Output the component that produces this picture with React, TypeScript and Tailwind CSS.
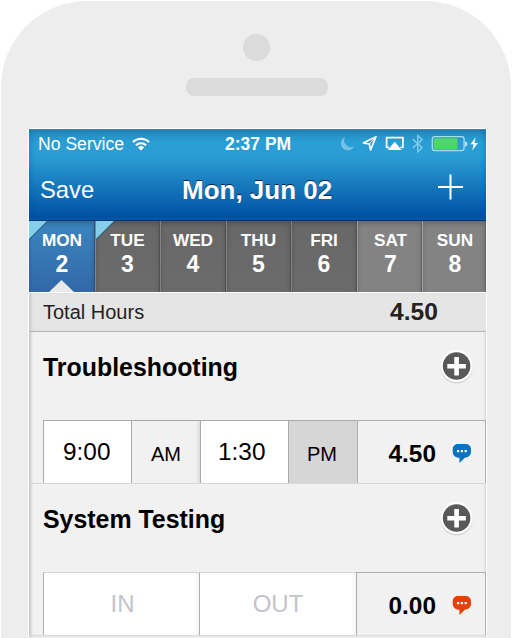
import React from "react";

const DAYS = [
  { name: "MON", date: "2", width: "w-[66px]", entry: true, kind: "active" },
  { name: "TUE", date: "3", width: "w-[65px]", entry: true, kind: "week" },
  { name: "WED", date: "4", width: "w-[66px]", entry: false, kind: "week" },
  { name: "THU", date: "5", width: "w-[65px]", entry: false, kind: "week" },
  { name: "FRI", date: "6", width: "w-[66px]", entry: false, kind: "week" },
  { name: "SAT", date: "7", width: "w-[65px]", entry: false, kind: "weekend" },
  { name: "SUN", date: "8", width: "w-[64px]", entry: false, kind: "weekend" },
];

const TAB_STYLE: Record<string, string> = {
  active: "bg-linear-to-b from-[#3b86c0] to-[#3268a8] border-r border-[#2a5486] pl-px",
  week: "bg-linear-to-b from-[#686868] to-[#6b6b6b] border-r border-r-[#505050] border-l border-l-[#838383]",
  weekend: "bg-[#838383] border-r border-r-[#626262] border-l border-l-[#a0a0a0] pl-[2px]",
};

function StatusIcons() {
  return (
    <svg width="140" height="20" viewBox="337.5 134 140 20" className="block shrink-0">
      <path d="M344.8 137a6.9 6.9 0 1 0 8.8 9.3a6.6 6.6 0 0 1-8.8-9.3z" fill="#75c2e6" />
      <path d="M375.5 136.6L362.8 143l6 1l1.3 6z" fill="none" stroke="#fff" strokeWidth="1.6" strokeLinejoin="round" />
      <path d="M368.8 144l6.4-7" stroke="#fff" strokeWidth="1" />
      <path d="M388.5 147.4h-2.4v-9.7h16.3v9.7h-2.4" fill="none" stroke="#fff" strokeWidth="1.7" />
      <path d="M394.2 141.8l6.9 8.3h-13.8z" fill="#fff" />
      <path d="M412.3 139.2l9.3 8.3l-4.3 4.4v-16.2l4.3 4.1l-9.3 8.3" fill="none" stroke="#84cced" strokeWidth="1.4" />
      <rect x="431.8" y="136.7" width="31.8" height="14" rx="2.4" fill="none" stroke="#a8dcf3" strokeWidth="1.3" />
      <rect x="433.3" y="138.2" width="23.7" height="11.2" rx="1" fill="#4cd864" />
      <path d="M464.7 141.2c2.8.7 2.8 4.8 0 5.5z" fill="#c5e8f6" />
      <path d="M475.2 137.3l-5.2 7h3.2l-1.6 6.3l5.9-7.5h-3.6z" fill="#fff" />
    </svg>
  );
}

function WifiIcon() {
  return (
    <svg width="18" height="14" viewBox="0 0 18 14" className="mt-[7px] ml-[8px] block">
      <g fill="none" stroke="#fff" strokeWidth="2">
        <path d="M.9 5a11.7 11.7 0 0 1 16.2 0" />
        <path d="M3.9 8.2a7.4 7.4 0 0 1 10.2 0" />
      </g>
      <path d="M5.9 10.4a4.6 4.6 0 0 1 6.2 0L9 13.5z" fill="#fff" />
    </svg>
  );
}

function AddButton() {
  return (
    <svg width="34" height="36" viewBox="0 0 34 36" className="block">
      <circle cx="16.6" cy="18.4" r="16" fill="#d4d4d4" />
      <circle cx="16.6" cy="17" r="16" fill="#fff" />
      <circle cx="16.6" cy="17" r="13.8" fill="#595959" />
      <path d="M7.3 17.3h18.6M16.6 8v18.6" stroke="#fff" strokeWidth="4.6" />
    </svg>
  );
}

function CommentIcon({ fill }: { fill: string }) {
  return (
    <svg width="20" height="21" viewBox="0 0 20 21" className="block">
      <path d="M6 1h7.5C17 1 19 3.3 19 6.6v1.8c0 3.6-2.2 5.8-5.8 6.2C11.2 16 9.8 18.5 7.3 20c.3-1.9.3-3.6 0-5.2C3.2 14.6.7 12.2.7 8.4V6.6C.7 3.3 2.7 1 6 1z" fill={fill} />
      <g fill="#fff">
        <rect x="5" y="7" width="2.2" height="2.2" />
        <rect x="8.8" y="7" width="2.2" height="2.2" />
        <rect x="12.6" y="7" width="2.2" height="2.2" />
      </g>
    </svg>
  );
}

function SectionTitle({ children }: { children: React.ReactNode }) {
  return (
    <div className="flex h-[88px] justify-between pr-[12px] pl-[14px]">
      <h2 className="pt-[17.5px] text-[24.9px] leading-[34px] font-bold text-black">{children}</h2>
      <div className="pt-[17px]"><AddButton /></div>
    </div>
  );
}

function RowTotal({ value, fill }: { value: string; fill: string }) {
  return (
    <div className="flex grow border-x border-t border-[#adafaf] bg-[#f1f1f1]">
      <span className="ml-auto pt-[17px] text-[24.4px] leading-[32px] font-bold">{value}</span>
      <span className="mt-[22px] mr-[13px] ml-[16px]"><CommentIcon fill={fill} /></span>
    </div>
  );
}

export default function App() {
  return (
    <div className="h-[638px] w-[512px] overflow-hidden bg-white font-['Liberation_Sans',Arial,sans-serif]">
      <div className="mx-px mt-px flex h-[637px] flex-col items-center rounded-t-[86px] bg-[#ededed]">
        <div className="mt-[33px] size-[27px] shrink-0 rounded-full bg-[#dbdbdb]" />
        <div className="mt-[17px] ml-px h-[18px] w-[142px] shrink-0 rounded-[8px] bg-[#dbdbdb]" />
        <main className="mt-[32px] ml-[3px] h-[509px] w-[459px] shrink-0 overflow-hidden border-x border-t border-white bg-[#f1f1f1] text-black shadow-[inset_3px_0_3px_-1px_#00000033,inset_-2px_0_2px_-1px_#00000022]">
          <header className="h-[92px] border-t border-b border-t-[#51829d] border-b-[#05346c] bg-[linear-gradient(180deg,#2388bd_0%,#2a9fd5_14%,#2a9dd4_30%,#0050a2_97%,#0060b5_100%)] text-white shadow-[inset_3px_0_4px_#00509033,inset_-3px_0_4px_#00509033]">
            <div className="flex h-[30px]">
              <div className="flex w-[196px] pl-[9px]">
                <span className="pt-[4px] text-[17.6px] leading-[20px] whitespace-nowrap">No Service</span>
                <WifiIcon />
              </div>
              <span className="w-[113px] pt-[4px] text-[17.5px] leading-[20px] font-bold">2:37 PM</span>
              <div className="pt-[4px]"><StatusIcons /></div>
            </div>
            <div className="flex h-[60px]">
              <span className="w-[153px] pt-[15px] pl-[11px] text-[23.8px] leading-[30px]">Save</span>
              <h1 className="w-[256px] pt-[15px] text-[26px] leading-[30px] font-bold [text-shadow:0_-1px_0_#05243f]">Mon, Jun 02</h1>
              <svg width="26" height="26" viewBox="0 0 26 26" className="mt-[14px] block">
                <path d="M0 13h25M12.5.5v25" stroke="#fff" strokeWidth="2" />
              </svg>
            </div>
          </header>
          <nav className="flex h-[71px]">
            {DAYS.map((d) => (
              <div key={d.name} className={`relative ${d.width} ${TAB_STYLE[d.kind]} flex flex-col items-center text-white shadow-[inset_0_3px_4px_#00000033]`}>
                {d.entry && (
                  <svg width="20" height="20" className="absolute top-0 left-0">
                    <path d="M0 0h18L0 18z" fill="#84d0eb" />
                    <path d="M18.7 0L0 18.7" stroke="#24587c" />
                  </svg>
                )}
                <span className="mt-[9px] text-[17.2px] leading-[20px] font-bold">{d.name}</span>
                <span className="mt-[2px] text-[23px] leading-[25px] font-bold">{d.date}</span>
                {d.kind === "active" && (
                  <svg width="26" height="12" className="absolute bottom-0 left-[20px]">
                    <path d="M0 12L12.5 0L25 12z" fill="#e9e9e9" />
                  </svg>
                )}
              </div>
            ))}
          </nav>
          <div className="flex h-[40px] border-t border-b border-t-white border-b-[#b6b6b6] bg-[#e5e5e5] text-[#222] shadow-[inset_3px_0_3px_-1px_#00000022]">
            <span className="w-[361px] pt-[5px] pl-[14px] text-[20px] leading-[28px]">Total Hours</span>
            <span className="pt-[4px] text-[24.6px] leading-[30px] font-bold">4.50</span>
          </div>
          <SectionTitle>Troubleshooting</SectionTitle>
          <div className="flex h-[64px] border-b border-[#d9d9d9] pl-[14px]">
            <div className="w-[88px] border-t border-l border-[#a8aaaa] bg-white pt-[15px] pl-[19px] text-[24.4px] leading-[32px]">9:00</div>
            <div className="w-[69px] border-t border-l border-[#a8aaaa] bg-[#f1f1f1] pt-[17px] pl-[19px] text-[20px] leading-[32px] shadow-[inset_-4px_0_4px_-3px_#00000022]">AM</div>
            <div className="w-[88px] border-t border-l border-[#a8aaaa] bg-white pt-[15px] pl-[17px] text-[24.4px] leading-[32px]">1:30</div>
            <div className="w-[69px] border-t border-l border-[#a8aaaa] bg-[#d6d6d6] pt-[17px] pl-[18px] text-[20px] leading-[32px]">PM</div>
            <RowTotal value="4.50" fill="#0b72bd" />
          </div>
          <SectionTitle>System Testing</SectionTitle>
          <div className="flex h-[64px] border-b border-[#d9d9d9] pl-[14px] text-[#c3c4ca]">
            <div className="w-[156px] border-t border-l border-t-[#d3d3d3] border-l-[#b0b0b0] bg-white pt-[15px] pl-[2px] text-center text-[24px] leading-[32px] shadow-[inset_-4px_0_4px_-3px_#00000012]">IN</div>
            <div className="w-[157px] border-t border-l border-t-[#d3d3d3] border-l-[#b0b0b0] bg-white pt-[15px] text-center text-[24px] leading-[32px] shadow-[inset_-4px_0_4px_-3px_#00000012]">OUT</div>
            <div className="flex grow text-black"><RowTotal value="0.00" fill="#e34108" /></div>
          </div>
        </main>
      </div>
    </div>
  );
}
